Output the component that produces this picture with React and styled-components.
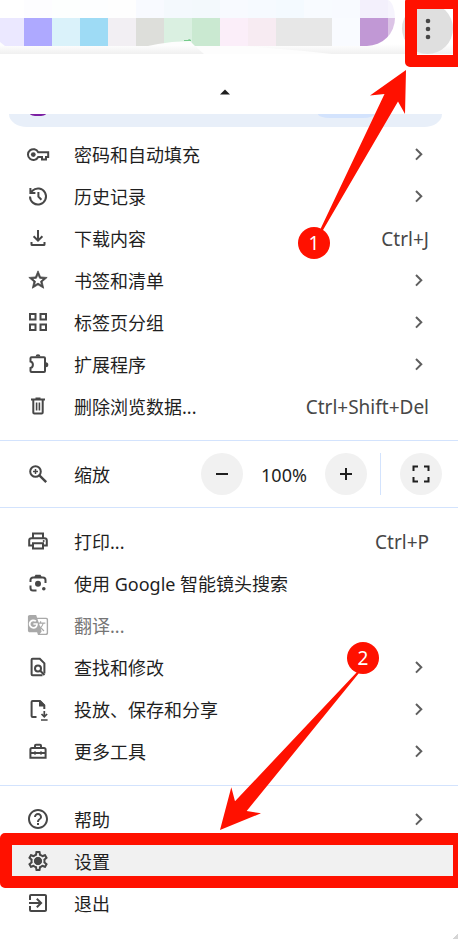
import React from 'react'
import styled, { createGlobalStyle } from 'styled-components'
import {
  MdExitToApp,
  MdGTranslate,
  MdHelpOutline,
  MdOutlineSettings,
  MdStarOutline,
} from 'react-icons/md'

const RED = '#ff1100'

const GlobalStyle = createGlobalStyle`
    * {
        box-sizing: border-box;
    }
    body {
        margin: 0;
        background: #fff;
        font-family: "Noto Sans", "Noto Sans CJK SC", sans-serif;
        font-size: 18px;
        color: #1f1f1f;
    }
    button {
        font: inherit;
        color: inherit;
        border: none;
        padding: 0;
        background: none;
        cursor: pointer;
    }
`

const Page = styled.div`
    position: relative;
    overflow: hidden;
    min-height: 100vh;
`

const Toolbar = styled.div`
    position: relative;
    display: flex;
    justify-content: space-between;
    height: 54px;
    padding-right: 5px;
    background: linear-gradient(#fff 44px, #f0f0f0 54px);
`

const Mosaic = styled.div`
    display: flex;
    height: 46px;
    overflow: hidden;
    border-radius: 0 8px 28px 0 / 0 18px 28px 0;
`

const Tile = styled.span`
    width: ${props => props.$width || 28}px;
    background: linear-gradient(${props => props.$top} 18px, ${props => props.$color} 18px);
`

const Swoosh = styled.svg`
    position: absolute;
    left: 0;
    bottom: 0;
`

const MoreButton = styled.button`
    display: flex;
    justify-content: center;
    align-items: center;
    width: 51px;
    height: 51px;
    margin-top: 3px;
    border-radius: 50%;
    background: #dfdfdf;
`

const Frame = styled.span`
    position: absolute;
    border: 12px solid ${RED};
    border-radius: 5px;
    pointer-events: none;
`

const MoreFrame = styled(Frame)`
    top: -3px;
    right: -7px;
    width: 60px;
    height: 70px;
`

const RowFrame = styled(Frame)`
    top: -7px;
    bottom: -6px;
    left: 0;
    right: -7px;
`

const Menu = styled.nav`
    position: relative;
    background: #fff;
    border-radius: 8px 0 0 0;
`

const ScrollUp = styled.button`
    display: flex;
    justify-content: center;
    align-items: center;
    width: 100%;
    height: 60px;
    padding: 16px 8px 0 0;
`

const ProfileCard = styled.div`
    display: flex;
    justify-content: space-between;
    height: 13px;
    margin: 0 16px 6px 9px;
    padding: 0 67px 0 21px;
    border-radius: 0 0 18px 18px / 0 0 13px 13px;
    background: #e8eff9;
`

const Avatar = styled.span`
    width: 16px;
    height: 2px;
    border-radius: 0 0 8px 8px / 0 0 2px 2px;
    background: #7b1fa2;
`

const Chip = styled.span`
    width: 57px;
    height: 4px;
    border-radius: 0 0 12px 12px / 0 0 4px 4px;
    background: #d3e3fd;
`

const Section = styled.div`
    padding: ${props => (props.$first ? '0' : '12px')} 0 13px;
    border-bottom: ${props => (props.$last ? 'none' : '1px solid #d3e3fd')};
`

const Item = styled.button`
    position: relative;
    display: flex;
    align-items: center;
    width: 100%;
    height: 42px;
    padding: 0 29px 0 26px;
    text-align: left;
    background: ${props => (props.$active ? '#f1f1f1' : 'transparent')};

    &:disabled {
        color: #757575;
        cursor: default;
    }
`

const IconBox = styled.span`
    display: flex;
    justify-content: center;
    align-items: center;
    width: 24px;
    height: 24px;
    margin-right: 24px;
    color: ${props => (props.$muted ? '#a9a9a9' : '#474747')};
`

const Label = styled.span`
    flex: 1;
    line-height: 24px;
    padding-top: 2px;
    white-space: nowrap;
`

const Shortcut = styled.span`
    line-height: 24px;
    padding-top: 2px;
    font-size: 19px;
    color: #474747;
`

const ZoomRow = styled.div`
    display: flex;
    align-items: center;
    height: 67px;
    padding: 0 16px 0 26px;
    border-bottom: 1px solid #d3e3fd;
`

const RoundButton = styled.button`
    display: flex;
    justify-content: center;
    align-items: center;
    width: 42px;
    height: 42px;
    border-radius: 50%;
    background: #f1f1f1;
`

const Percent = styled.span`
    width: 82px;
    padding-top: 2px;
    text-align: center;
`

const Separator = styled.span`
    width: 1px;
    height: 42px;
    margin: 0 19px 0 13px;
    background: #d3e3fd;
`

const Pointer = styled.div`
    position: absolute;
    top: ${props => props.$top}px;
    right: ${props => props.$right}px;
    display: flex;
    pointer-events: none;
`

const Badge = styled.span`
    position: absolute;
    ${props => (props.$corner === 'bottom' ? 'bottom: 0; left: 0;' : 'top: 0; right: 0;')}
    display: flex;
    justify-content: center;
    align-items: center;
    width: 32px;
    height: 32px;
    border-radius: 50%;
    background: ${RED};
    color: #fff;
    font-size: 19px;
`

const Corner = styled.span`
    position: absolute;
    right: 0;
    bottom: 0;
    width: 5px;
    height: 5px;
    background: linear-gradient(135deg, transparent 50%, #d5d5d5 50%);
`

const tiles = [
  { width: 24, top: '#ffffff', color: '#ebe8ff' },
  { top: '#fdfdff', color: '#aea9ff' },
  { top: '#fdfffe', color: '#daf2fa' },
  { top: '#fdfeff', color: '#9edbf5' },
  { top: '#fefefe', color: '#f2eff3' },
  { top: '#f8faff', color: '#dddeda' },
  { top: '#f4f9fd', color: '#daf0e1' },
  { top: '#f3f9fc', color: '#cae9d1' },
  { top: '#f8faff', color: '#fbeef9' },
  { top: '#f6faff', color: '#f7ebf2' },
  { top: '#f4faff', color: '#e7e7e7' },
  { top: '#f8fbff', color: '#e7e7e7' },
  { top: '#f8faff', color: '#f9fbff' },
  { top: '#f3f0fc', color: '#c198d5' },
  { width: 7, top: '#f6f4fd', color: '#dcc4e6' },
]

const Glyph = ({ children, size = 24 }) => (
  <svg
    width={size}
    height={size}
    viewBox={`0 0 ${size} ${size}`}
    fill="none"
    stroke="currentColor"
    strokeWidth="2"
    aria-hidden="true"
  >
    {children}
  </svg>
)

const KeyIcon = () => (
  <Glyph>
    <path d="M12.2 10.2A5.4 5.4 0 1 0 12.2 15H16v2.6h4V15h2.2v-4.8z" />
    <circle cx="7.3" cy="12.6" r="2.4" fill="currentColor" stroke="none" />
  </Glyph>
)

const HistoryIcon = () => (
  <Glyph>
    <path d="M4 12.5a8 8 0 1 0 2.4-5.7L4.5 8.8" />
    <path d="M4.4 4v5h5M12.4 8v4.6l3 3.2" />
  </Glyph>
)

const DownloadIcon = () => (
  <Glyph>
    <path d="M12 4v10.5M7.6 10.2l4.4 4.4 4.4-4.4M5.5 16v2.5a.6.6 0 0 0 .6.6h11.8a.6.6 0 0 0 .6-.6V16" />
  </Glyph>
)

const GridIcon = () => (
  <Glyph>
    <path d="M4 4h5.5v5.5H4zM14.5 4H20v5.5h-5.5zM4 14.5h5.5V20H4zM14.5 14.5H20V20h-5.5z" />
  </Glyph>
)

const ExtensionIcon = () => (
  <Glyph>
    <path d="M4.5 9.5V6.2a1 1 0 0 1 1-1H18a1 1 0 0 1 1 1V19a1 1 0 0 1-1 1H5.5a1 1 0 0 1-1-1v-3c3.2-.8 3.2-5.7 0-6.5z" />
    <path d="M9.6 4.6a2.4 2.4 0 0 1 4.8 0zM19.8 10.2a2.5 2.5 0 0 1 0 5z" fill="currentColor" stroke="none" />
  </Glyph>
)

const TrashIcon = () => (
  <Glyph>
    <path d="M5 5.5h14M9.5 4.5h5M7.3 5.5v13a1 1 0 0 0 1 1h7.4a1 1 0 0 0 1-1v-13" />
    <path d="M10.6 8.5v8M13.4 8.5v8" strokeWidth="1.6" />
  </Glyph>
)

const ZoomIcon = () => (
  <Glyph>
    <circle cx="9.5" cy="9.5" r="5.3" />
    <path d="M13.4 13.4l6.8 6.8" strokeWidth="2.4" />
    <path d="M9.5 7v5M7 9.5h5" strokeWidth="1.5" />
  </Glyph>
)

const PrintIcon = () => (
  <Glyph>
    <path d="M7 9V4.6h10V9M7 16.5H3.2v-5a2.3 2.3 0 0 1 2.3-2.3h13a2.3 2.3 0 0 1 2.3 2.3v5H17M7 14.2h10v5.3H7z" />
    <circle cx="17.7" cy="12" r="1" fill="currentColor" stroke="none" />
  </Glyph>
)

const LensIcon = () => (
  <Glyph>
    <path d="M4.5 11V9A2.5 2.5 0 0 1 7 6.5h10A2.5 2.5 0 0 1 19.5 9v3M4.5 14.5V17A2.5 2.5 0 0 0 7 19.5h3.5" />
    <path d="M8 6.5l1.5-2.8h5L16 6.5z" fill="currentColor" stroke="none" />
    <circle cx="12" cy="12.8" r="3" fill="currentColor" stroke="none" />
    <circle cx="17.8" cy="17.8" r="1.8" fill="currentColor" stroke="none" />
  </Glyph>
)

const FindIcon = () => (
  <Glyph>
    <path d="M16.5 20.3H6.6a1 1 0 0 1-1-1V4.7a1 1 0 0 1 1-1h7.2l4.6 4.6v10.2" />
    <circle cx="12" cy="13.5" r="3" />
    <path d="M14.2 15.7l4.3 4.3" />
  </Glyph>
)

const SaveIcon = () => (
  <Glyph>
    <path d="M10.5 20H6.6a1 1 0 0 1-1-1V5a1 1 0 0 1 1-1H14l4.3 4.3V12" />
    <path d="M13 4h2l4 4v1.6h-6z" fill="currentColor" stroke="none" />
    <path d="M18.3 14v5.5M15.5 17l2.8 2.8 2.8-2.8M15 23h6.6" strokeWidth="1.7" />
  </Glyph>
)

const ToolboxIcon = () => (
  <Glyph>
    <path d="M4.4 18.8v-8.3A1.5 1.5 0 0 1 5.9 9h12.2a1.5 1.5 0 0 1 1.5 1.5v8.3zM9 9V6.7a1 1 0 0 1 1-1h4a1 1 0 0 1 1 1V9M4.4 14h15.2" />
    <path d="M9 12.5v3M15 12.5v3" />
  </Glyph>
)

const SettingsIcon = () => (
  <Glyph>
    <MdOutlineSettings size={24} />
    <circle cx="12" cy="12" r="3.8" fill="currentColor" stroke="none" />
  </Glyph>
)

const Chevron = () => (
  <Glyph size={20}>
    <path d="M7 5l5.3 5.3L7 15.6" stroke="#5f5f5f" />
  </Glyph>
)

const groups = [
  [
    { label: '密码和自动填充', icon: <KeyIcon />, submenu: true },
    { label: '历史记录', icon: <HistoryIcon />, submenu: true },
    { label: '下载内容', icon: <DownloadIcon />, shortcut: 'Ctrl+J' },
    { label: '书签和清单', icon: <MdStarOutline size={22} strokeWidth="0.8" />, submenu: true },
    { label: '标签页分组', icon: <GridIcon />, submenu: true },
    { label: '扩展程序', icon: <ExtensionIcon />, submenu: true },
    { label: '删除浏览数据...', icon: <TrashIcon />, shortcut: 'Ctrl+Shift+Del' },
  ],
  [
    { label: '打印...', icon: <PrintIcon />, shortcut: 'Ctrl+P' },
    { label: '使用 Google 智能镜头搜索', icon: <LensIcon /> },
    { label: '翻译...', icon: <MdGTranslate size={22} />, disabled: true },
    { label: '查找和修改', icon: <FindIcon />, submenu: true },
    { label: '投放、保存和分享', icon: <SaveIcon />, submenu: true },
    { label: '更多工具', icon: <ToolboxIcon />, submenu: true },
  ],
  [
    { label: '帮助', icon: <MdHelpOutline size={24} />, submenu: true },
    { label: '设置', icon: <SettingsIcon />, active: true },
    { label: '退出', icon: <MdExitToApp size={24} /> },
  ],
]

const MenuItem = (props) => {
  return (
    <Item type="button" disabled={props.disabled} $active={props.active}>
      <IconBox $muted={props.disabled}>{props.icon}</IconBox>
      <Label>{props.label}</Label>
      {props.shortcut && <Shortcut>{props.shortcut}</Shortcut>}
      {props.submenu && <Chevron />}
      {props.active && <RowFrame />}
    </Item>
  )
}

const MenuSection = ({ items, first, last }) => (
  <Section $first={first} $last={last}>
    {items.map(item => <MenuItem key={item.label} {...item} />)}
  </Section>
)

const App = () => {
  return (
    <Page>
      <GlobalStyle />
      <Toolbar>
        <Mosaic>
          {tiles.map((tile, i) => (
            <Tile key={i} $width={tile.width} $top={tile.top} $color={tile.color} />
          ))}
        </Mosaic>
        <Swoosh width="340" height="16" viewBox="0 0 340 16" aria-hidden="true">
          <path d="M0 4l5 4H0zM148 8l10-2 14-2 18-1 5 5 9 8h128l-28-3-60-5z" fill="#fdfdfd" />
          <path d="M184 3v-1h4l1-1 2 1v1z" fill="#76cb8b" />
        </Swoosh>
        <MoreButton type="button" aria-label="更多">
          <svg width="6" height="24" viewBox="0 0 6 24" fill="#474747">
            <circle cx="3" cy="4" r="2.3" />
            <circle cx="3" cy="12" r="2.3" />
            <circle cx="3" cy="20" r="2.3" />
          </svg>
        </MoreButton>
      </Toolbar>

      <Menu>
        <ScrollUp type="button" aria-label="向上滚动">
          <svg width="10" height="6" viewBox="0 0 10 6">
            <path d="M0 5.5l5-5 5 5z" fill="#1f1f1f" />
          </svg>
        </ScrollUp>
        <ProfileCard>
          <Avatar />
          <Chip />
        </ProfileCard>
        <MenuSection items={groups[0]} first />
        <ZoomRow>
          <IconBox><ZoomIcon /></IconBox>
          <Label>缩放</Label>
          <RoundButton type="button" aria-label="缩小">
            <Glyph><path d="M6 12h12" stroke="#1f1f1f" /></Glyph>
          </RoundButton>
          <Percent>100%</Percent>
          <RoundButton type="button" aria-label="放大">
            <Glyph><path d="M6 12h12M12 6v12" stroke="#1f1f1f" /></Glyph>
          </RoundButton>
          <Separator />
          <RoundButton type="button" aria-label="全屏">
            <Glyph>
              <path d="M4.5 9V4.5H9M15 4.5h4.5V9M19.5 15v4.5H15M9 19.5H4.5V15" stroke="#1f1f1f" />
            </Glyph>
          </RoundButton>
        </ZoomRow>
        <MenuSection items={groups[1]} />
        <MenuSection items={groups[2]} last />
      </Menu>

      <MoreFrame />
      <Pointer $top={70} $right={52}>
        <svg width="108" height="189" viewBox="0 0 108 189" fill={RED}>
          <path d="M108 0L72 25.5 86.5 24 22 160h3l75-128.5 7 12.5z" />
        </svg>
        <Badge $corner="bottom">1</Badge>
      </Pointer>
      <Pointer $top={642} $right={79}>
        <svg width="159" height="188" viewBox="0 0 159 188" fill={RED}>
          <path d="M0 188l11.3-42.7 3.7 14L137 30l2 1L26.7 169l14.3 2.3z" />
        </svg>
        <Badge $corner="top">2</Badge>
      </Pointer>
      <Corner />
    </Page>
  )
}

export default App
